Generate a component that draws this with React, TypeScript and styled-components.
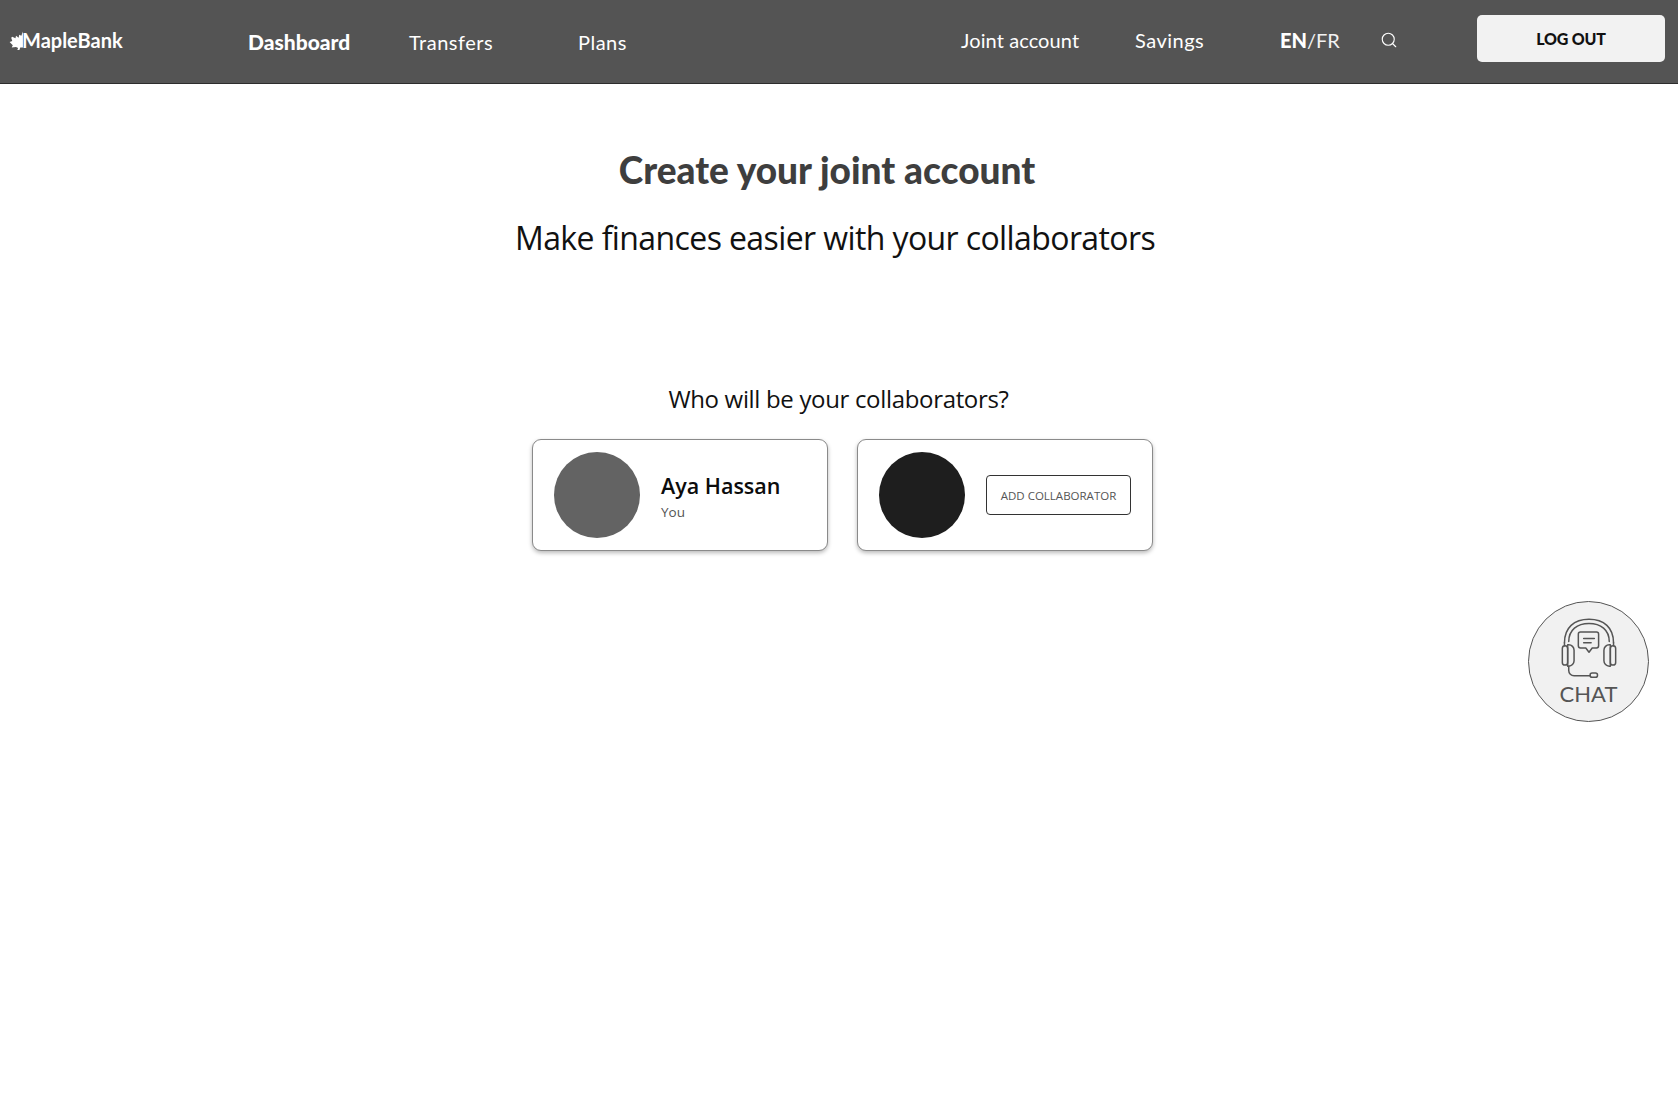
import React from "react";
import styled, { createGlobalStyle } from "styled-components";
import { Search } from "lucide-react";

const Global = createGlobalStyle`
  html, body { margin: 0; padding: 0; background: #fff; }
  body { font-family: "Open Sans", "Liberation Sans", sans-serif; }
`;

const Page = styled.div`
  position: relative;
  width: 1678px;
  height: 1119px;
  overflow: hidden;
`;

const Header = styled.header`
  display: flex;
  align-items: center;
  box-sizing: border-box;
  height: 84px;
  padding: 0 13px 0 8px;
  background: #545454;
  border-bottom: 1px solid #2c2c2c;
  color: #fff;
  font-family: Lato, "Liberation Sans", sans-serif;
`;

const Logo = styled.div`
  display: flex;
  align-items: center;
  width: 240px;
  margin-top: -3px;
  font-size: 20px;
  font-weight: 700;
`;

const LogoName = styled.span`
  margin-left: -2px;
`;

const MainNav = styled.nav`
  display: flex;
  align-items: center;
  flex: 1;
`;

const NavItem = styled.a<{ $width: number; $bold?: boolean }>`
  width: ${(p) => p.$width}px;
  font-size: ${(p) => (p.$bold ? 21 : 20)}px;
  font-weight: ${(p) => (p.$bold ? 900 : 400)};
  letter-spacing: ${(p) => (p.$bold ? 0 : 0.5)}px;
  white-space: nowrap;
`;

const SideNav = styled.nav`
  display: flex;
  align-items: center;
  margin-top: -3px;
`;

const SideItem = styled.a<{ $width: number; $spacing: number }>`
  width: ${(p) => p.$width}px;
  font-size: 20px;
  letter-spacing: ${(p) => p.$spacing}px;
  white-space: nowrap;
`;

const Lang = styled.span`
  width: 100px;
  font-size: 20px;
  color: #f2f2f2;
  b { font-weight: 900; color: #fff; }
`;

const SearchBox = styled.span`
  display: flex;
  width: 97px;
`;

const LogOut = styled.button`
  width: 188px;
  height: 47px;
  margin-top: -3px;
  border: 0;
  border-radius: 5px;
  background: #f2f2f2;
  color: #111;
  font-family: Lato, "Liberation Sans", sans-serif;
  font-size: 16px;
  font-weight: 900;
  letter-spacing: -0.2px;
`;

const Main = styled.main`
  display: flex;
  flex-direction: column;
  box-sizing: border-box;
  width: 640px;
  margin-left: 515px;
`;

const Title = styled.h1`
  margin: 61px 16px 0 0;
  color: #3e3e3e;
  font-family: Lato, "Liberation Sans", sans-serif;
  font-size: 37px;
  line-height: 50px;
  font-weight: 900;
  text-align: center;
  white-space: nowrap;
`;

const Subtitle = styled.h2`
  margin: 20px 2px 0 0;
  color: #111;
  font-size: 32px;
  line-height: 46px;
  font-weight: 400;
  letter-spacing: -0.6px;
  text-align: center;
  white-space: nowrap;
`;

const Question = styled.h3`
  margin: 121px 0 0 7px;
  color: #111;
  font-size: 24px;
  line-height: 34px;
  font-weight: 400;
  letter-spacing: -0.33px;
  text-align: center;
  white-space: nowrap;
`;

const Cards = styled.div`
  display: flex;
  gap: 29px;
  margin: 23px 0 0 17px;
`;

const Card = styled.section`
  display: flex;
  align-items: center;
  gap: 21px;
  box-sizing: border-box;
  width: 296px;
  height: 112px;
  padding: 0 21px;
  border: 1px solid #8a8a8a;
  border-radius: 9px;
  background: #fff;
  box-shadow: 0 2px 4px rgba(0, 0, 0, 0.28);
`;

const Avatar = styled.div<{ $color: string }>`
  flex: none;
  width: 86px;
  height: 86px;
  border-radius: 50%;
  background: ${(p) => p.$color};
`;

const Person = styled.div`
  display: flex;
  flex-direction: column;
  gap: 2px;
  margin-top: 2px;
`;

const Name = styled.div`
  color: #0c0c0c;
  font-size: 21.5px;
  line-height: 30px;
  font-weight: 600;
`;

const You = styled.div`
  color: #555;
  font-size: 13.5px;
  line-height: 18px;
`;

const AddButton = styled.button`
  box-sizing: border-box;
  width: 147px;
  height: 40px;
  padding: 0;
  border: 1px solid #333;
  border-radius: 4px;
  background: #fff;
  color: #555;
  font-family: "Open Sans", "Liberation Sans", sans-serif;
  font-size: 11.5px;
  white-space: nowrap;
`;

const Chat = styled.div`
  position: absolute;
  left: 1528px;
  top: 601px;
  display: flex;
  flex-direction: column;
  align-items: center;
  box-sizing: border-box;
  width: 121px;
  height: 121px;
  padding-top: 14px;
  border: 1.5px solid #555;
  border-radius: 50%;
  background: #f1f1f1;
  color: #555;
`;

const ChatLabel = styled.div`
  margin-top: 1px;
  font-family: Lato, "Liberation Sans", sans-serif;
  font-size: 22px;
  line-height: 26px;
`;

const Leaf = () => (
  <svg width="16" height="19" viewBox="0 0 15 17" fill="#fff">
    <path d="M14 0l-1.5 4-2-1-.5 3-2.5-2-.5 2.5-3-1.5-1 1 1 3-2.5 1 3 3-1 2 4-.5 2 1-1 2.5 2 0 1-3 2.500 0V6z" />
  </svg>
);

const Headset = () => (
  <svg width="64" height="64" viewBox="0 0 60 60" fill="none" stroke="#555" strokeWidth="1.4" strokeLinecap="round" strokeLinejoin="round">
    <path d="M7 25c0-14 9-22 23-22s23 8 23 22" />
    <path d="M11 24c0-11 8-17 19-17s19 6 19 17" />
    <path d="M7 25v3M53 25v3" />
    <rect x="5" y="28" width="5" height="18" rx="2.5" />
    <path d="M10 27h1a5 5 0 0 1 5 5v10a5 5 0 0 1-5 5h-1z" />
    <rect x="50" y="28" width="5" height="18" rx="2.5" />
    <path d="M50 27h-1a5 5 0 0 0-5 5v10a5 5 0 0 0 5 5h1z" />
    <path d="M22 15h15a2 2 0 0 1 2 2v11a2 2 0 0 1-2 2h-4l-3 4-3-4h-5a2 2 0 0 1-2-2V17a2 2 0 0 1 2-2z" />
    <path d="M25 21h10M25 25h7" />
    <path d="M11 47v4a5 5 0 0 0 5 5h15" />
    <rect x="31" y="53.5" width="7" height="4" rx="2" />
  </svg>
);

export default function App() {
  return (
    <Page>
      <Global />
      <Header>
        <Logo>
          <Leaf />
          <LogoName>MapleBank</LogoName>
        </Logo>
        <MainNav>
          <NavItem $width={161} $bold>Dashboard</NavItem>
          <NavItem $width={169}>Transfers</NavItem>
          <NavItem $width={60}>Plans</NavItem>
        </MainNav>
        <SideNav>
          <SideItem $width={174} $spacing={0.1}>Joint account</SideItem>
          <SideItem $width={145} $spacing={0.5}>Savings</SideItem>
          <Lang><b>EN</b>/FR</Lang>
          <SearchBox><Search size={18} strokeWidth={1.5} color="#fff" /></SearchBox>
          <LogOut>LOG OUT</LogOut>
        </SideNav>
      </Header>
      <Main>
        <Title>Create your joint account</Title>
        <Subtitle>Make finances easier with your collaborators</Subtitle>
        <Question>Who will be your collaborators?</Question>
        <Cards>
          <Card>
            <Avatar $color="#636363" />
            <Person>
              <Name>Aya Hassan</Name>
              <You>You</You>
            </Person>
          </Card>
          <Card>
            <Avatar $color="#1e1e1e" />
            <AddButton>ADD COLLABORATOR</AddButton>
          </Card>
        </Cards>
      </Main>
      <Chat>
        <Headset />
        <ChatLabel>CHAT</ChatLabel>
      </Chat>
    </Page>
  );
}
